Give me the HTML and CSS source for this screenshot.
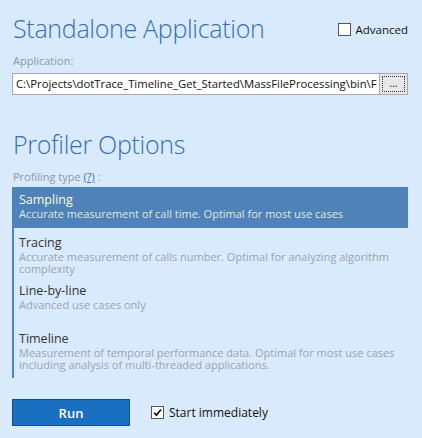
FILE: index.html
```html
<!DOCTYPE html>
<html>
<head>
<meta charset="utf-8">
<link rel="stylesheet" href="styles.css">
</head>
<body>
<div class="page">
  <div class="head-row">
    <h1 class="title">Standalone Application</h1>
    <label class="check">
      <span class="box"></span>
      <span>Advanced</span>
    </label>
  </div>
  <div class="label">Application:</div>
  <div class="path-row">
    <div class="path">C:\Projects\dotTrace_Timeline_Get_Started\MassFileProcessing\bin\F</div>
    <div class="browse"><span>...</span></div>
  </div>

  <h1 class="title title2">Profiler Options</h1>
  <div class="label">Profiling type <span class="help">(?)</span> :</div>

  <div class="list">
    <div class="item selected">
      <div class="item-title">Sampling</div>
      <div class="item-desc">Accurate measurement of call time. Optimal for most use cases</div>
    </div>
    <div class="item">
      <div class="item-title">Tracing</div>
      <div class="item-desc">Accurate measurement of calls number. Optimal for analyzing algorithm complexity</div>
    </div>
    <div class="item">
      <div class="item-title">Line-by-line</div>
      <div class="item-desc">Advanced use cases only</div>
    </div>
    <div class="item">
      <div class="item-title">Timeline</div>
      <div class="item-desc">Measurement of temporal performance data. Optimal for most use cases including analysis of multi-threaded applications.</div>
    </div>
  </div>

  <div class="bottom">
    <button class="run">Run</button>
    <label class="check">
      <span class="box checked">
        <svg viewBox="0 0 13 13" width="13" height="13"><path d="M2.5 6.8 L5.2 9.6 L10.6 3" fill="none" stroke="#111" stroke-width="2"/></svg>
      </span>
      <span>Start immediately</span>
    </label>
  </div>
</div>
</body>
</html>
```

FILE: styles.css
```css
html, body {
  margin: 0;
  padding: 0;
  background: #d9eafd;
}
body {
  font-family: "Open Sans", "Noto Sans", sans-serif;
  color: #222;
  width: 422px;
  height: 438px;
  overflow: hidden;
}
.page {
  padding: 10px 14px 0 12px;
}
.head-row {
  display: flex;
  align-items: flex-start;
  justify-content: space-between;
}
.title {
  margin: 0;
  font-weight: 300;
  font-size: 25px;
  line-height: 36px;
  color: #3570b4;
  letter-spacing: -0.3px;
  padding-left: 1px;
}
.title2 {
  margin-top: 31px;
}
.check {
  display: flex;
  align-items: center;
  gap: 5px;
  font-size: 11.5px;
  color: #111;
}
.head-row .check {
  margin-top: 12px;
}
.box {
  width: 11px;
  height: 11px;
  border: 1px solid #555;
  background: #fff;
  display: flex;
  align-items: center;
  justify-content: center;
}
.box svg {
  display: block;
}
.label {
  font-size: 11px;
  color: #8e98a4;
  margin-top: 8px;
  line-height: 14px;
  padding-left: 1px;
}
.help {
  color: #3a6fb5;
  text-decoration: underline;
}
.path-row {
  display: flex;
  margin-top: 5px;
  height: 22px;
}
.path {
  flex: 1;
  border: 1px solid #a9a9a9;
  border-right: none;
  background: #fff;
  font-size: 11.3px;
  line-height: 20px;
  padding-left: 3px;
  white-space: nowrap;
  overflow: hidden;
  color: #111;
}
.browse {
  width: 29px;
  border: 1px solid #a9a9a9;
  background: #e7e7e7;
  box-sizing: border-box;
  padding: 2px;
  display: flex;
}
.browse span {
  flex: 1;
  border: 1px dotted #333;
  font-size: 10px;
  text-align: center;
  line-height: 12px;
  color: #111;
}
.list {
  margin-top: 3px;
  border-left: 2px solid #4b86c4;
  padding-bottom: 4px;
}
.item {
  box-sizing: border-box;
  padding: 5px 6px 3px 5px;
  min-height: 48px;
}
.item.selected {
  background: #4e82b9;
  margin-left: -2px;
  padding-left: 7px;
  min-height: 41px;
  margin-bottom: 2px;
}
.item-title {
  font-size: 12.5px;
  line-height: 16px;
  color: #333;
}
.item-desc {
  font-size: 11px;
  line-height: 12px;
  color: #9ca3ad;
}
.selected .item-title {
  color: #fbfbd2;
}
.selected .item-desc {
  color: #dfe9e0;
}
.bottom {
  display: flex;
  align-items: center;
  gap: 21px;
  margin-top: 21px;
}
.run {
  width: 118px;
  height: 27px;
  background: #1a6fc0;
  border: 1px solid #0d4f8f;
  color: #fff;
  font-family: inherit;
  font-size: 13px;
  font-weight: 600;
  padding: 0;
}
.bottom .check {
  font-size: 12px;
}
```
